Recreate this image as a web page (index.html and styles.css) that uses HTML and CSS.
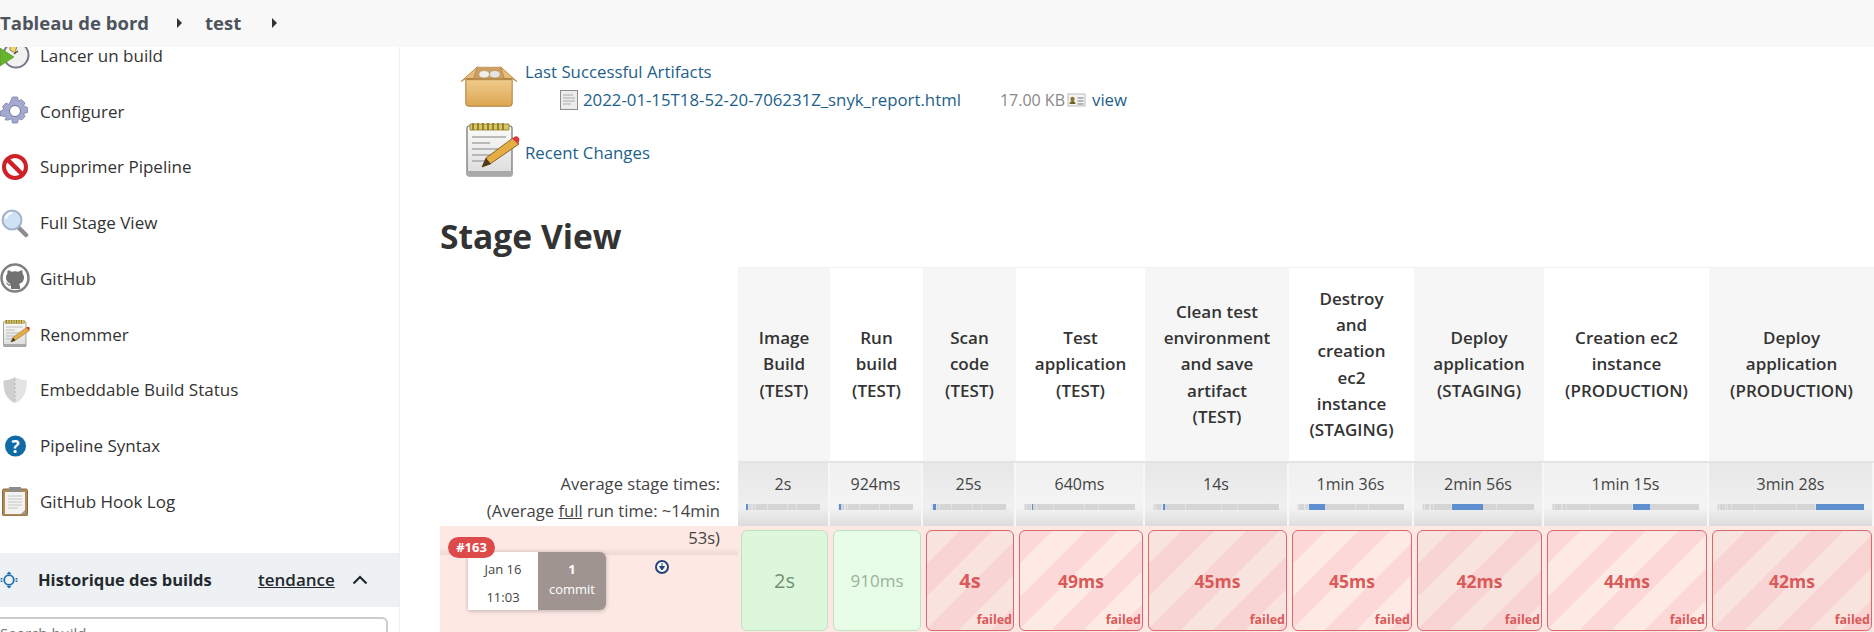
FILE: index.html
```html
<!DOCTYPE html>
<html lang="fr">
<head>
<meta charset="utf-8">
<title>test - Jenkins</title>
<link rel="stylesheet" href="styles.css">
</head>
<body>
<svg class="defs" width="0" height="0" aria-hidden="true">
  <defs>
    <linearGradient id="pad" x1="0" y1="0" x2="0" y2="1"><stop offset="0" stop-color="#fbfbf8"/><stop offset="1" stop-color="#dcdcdc"/></linearGradient>
    <linearGradient id="boxg" x1="0" y1="0" x2="0" y2="1"><stop offset="0" stop-color="#f0cb8a"/><stop offset="1" stop-color="#dca653"/></linearGradient>
    <symbol id="notepad" viewBox="0 0 60 60">
      <rect x="7" y="5" width="45" height="50" rx="2" fill="url(#pad)" stroke="#6e6e6e" stroke-width="1.2"/>
      <rect x="7" y="50" width="45" height="5" fill="#a9a9a9"/>
      <path d="M10 3h39v6H10z" fill="#d8c66a" stroke="#8d7a20" stroke-width=".8"/>
      <path d="M13 2v7M18 2v7M23 2v7M28 2v7M33 2v7M38 2v7M43 2v7" stroke="#857218" stroke-width="1.6"/>
      <path d="M12 16h34M12 22h18M12 28h28M12 34h18M12 40h14" stroke="#a8a8a8" stroke-width="1.4"/>
      <path d="M22 46l4-9 27-20 6 6-29 20z" fill="#e5ae44" stroke="#8a6420" stroke-width="1"/>
      <path d="M22 46l4-9 5 6z" fill="#4a3a20"/>
      <path d="M52 17.500l3-2a3.500 3.500 0 0 1 4 5l-1 2.500z" fill="#d8383c"/>
    </symbol>
  </defs>
</svg>

<header class="crumbs">
  <a class="crumb">Tableau de bord</a>
  <span class="caret"></span>
  <a class="crumb crumb-test">test</a>
  <span class="caret caret-last"></span>
</header>

<div class="page">
  <aside class="side">
    <nav class="tasks">
      <a class="task">
        <svg class="ti" viewBox="0 0 30 30"><circle cx="16" cy="15" r="12.500" fill="#f1f1f1" stroke="#77778a" stroke-width="2"/><path d="M10 4l7 2-2 7-5-3z" fill="#f2d66b" stroke="#7c6a20" stroke-width=".8"/><path d="M14 14l4-3" stroke="#555" stroke-width="1.500"/><path d="M0 8l14 9L0 26z" fill="#66b32e" stroke="#4b8f1e" stroke-width=".6"/></svg>
        <span>Lancer un build</span>
      </a>
      <a class="task">
        <svg class="ti" viewBox="0 0 30 30"><path d="M12.500 1h5l1 4 3-1.500 3.500 3.500-1.500 3 4 1.500v5l-4 1 1.500 3-3.500 3.500-3-1.500-1 4.500h-5l-1-4.500-3 1.500L5 24l1.500-3-4-1H.5v-5l3.500-1.500-1.500-3L6 7l3 1.500z" fill="#a3a9cf" stroke="#7a81a8" stroke-width=".8"/><circle cx="15" cy="15" r="5.500" fill="#fff" stroke="#6f7699"/></svg>
        <span>Configurer</span>
      </a>
      <a class="task">
        <svg class="ti" viewBox="0 0 30 30"><circle cx="15" cy="15" r="11" fill="#fff" stroke="#cf2027" stroke-width="4"/><path d="M7.500 7.500l15 15" stroke="#cf2027" stroke-width="4.500"/></svg>
        <span>Supprimer Pipeline</span>
      </a>
      <a class="task">
        <svg class="ti" viewBox="0 0 30 30"><path d="M18 19l8 8" stroke="#8b8f94" stroke-width="4.500" stroke-linecap="round"/><circle cx="12" cy="12" r="9.500" fill="#cfe2f5" stroke="#a4b4c6" stroke-width="2"/><path d="M6 11a6 6 0 0 1 6-6" stroke="#fff" stroke-width="2" fill="none"/></svg>
        <span>Full Stage View</span>
      </a>
      <a class="task">
        <svg class="ti" viewBox="0 0 30 30"><circle cx="15" cy="15" r="13.500" fill="#fff" stroke="#808080" stroke-width="2.500"/><path d="M11 26v-3.500c-3 .6-4-1-5-3 1.200 0 2 1 3 2l2-.5c-3-1-5-3-5-6.500 0-1.500.5-2.800 1.500-3.800-.3-1.200-.2-2.500.4-3.500 1.400.1 2.600.8 3.600 1.600a11 11 0 0 1 7 0c1-.8 2.200-1.500 3.600-1.600.6 1 .7 2.300.4 3.500 1 1 1.500 2.300 1.500 3.800 0 3.500-2 5.500-5 6.500.6.700 1 1.700 1 3V26z" fill="#717171"/></svg>
        <span>GitHub</span>
      </a>
      <a class="task">
        <svg class="ti" viewBox="0 0 60 60"><use href="#notepad"/></svg>
        <span>Renommer</span>
      </a>
      <a class="task">
        <svg class="ti" viewBox="0 0 30 30"><path d="M15 2c3 2 8 3.500 11.500 3.500C27 17 23 25 15 28 7 25 3 17 3.500 5.500 7 5.500 12 4 15 2z" fill="#cfcfcf"/><path d="M15 2c3 2 8 3.500 11.500 3.500C27 17 23 25 15 28z" fill="#e4e4e4"/><path d="M15 4v22" stroke="#b5b5b5" stroke-dasharray="2 2"/></svg>
        <span>Embeddable Build Status</span>
      </a>
      <a class="task">
        <svg class="ti" viewBox="0 0 30 30"><circle cx="15.500" cy="15" r="10.500" fill="#0f6aa5"/><text class="help-q" x="15.500" y="21.500" text-anchor="middle">?</text></svg>
        <span>Pipeline Syntax</span>
      </a>
      <a class="task">
        <svg class="ti" viewBox="0 0 30 30"><rect x="2.500" y="3" width="25" height="27" rx="1.500" fill="#b08a58" stroke="#8a6a3e"/><path d="M5 6h20v19l-4 3H5z" fill="#f3f3f0"/><path d="M21 28l4-4v4z" fill="#9a9a9a"/><rect x="9" y="1" width="12" height="5" fill="#8d8d8d"/><path d="M8 10h14M8 13h14M8 16h14M8 19h14M8 22h10" stroke="#c4c4c4"/></svg>
        <span>GitHub Hook Log</span>
      </a>
    </nav>

    <section class="history">
      <div class="history-bar">
        <svg class="sun" viewBox="0 0 18 18"><circle cx="9" cy="9" r="4.800" fill="none" stroke="#1f6fa8" stroke-width="1.800"/><path d="M9 .5l2.500 2.500h-5zM9 17.500l2.500-2.500h-5z" fill="#1f6fa8"/><path d="M1.500 7v4M16.500 7v4" stroke="#1f6fa8" stroke-width="1.800" stroke-dasharray="1.500 1"/></svg>
        <strong class="history-title">Historique des builds</strong>
        <a class="trend">tendance</a>
        <svg class="chev" viewBox="0 0 16 10"><path d="M1.500 8.500L8 2l6.500 6.500" fill="none" stroke="#24292e" stroke-width="2.200"/></svg>
      </div>
      <div class="search">Search build</div>
    </section>
  </aside>

  <main class="main">
    <div class="permalink">
      <svg class="big-icon box-icon" viewBox="0 0 60 48" preserveAspectRatio="none">
        <path d="M6 16h48v26a3 3 0 0 1-3 3H9a3 3 0 0 1-3-3z" fill="url(#boxg)" stroke="#a97a34"/>
        <path d="M14 15l4-13h24l4 13z" fill="#caa066"/>
        <ellipse cx="25" cy="10" rx="5" ry="3.500" fill="#eee"/><ellipse cx="36" cy="10" rx="5" ry="3.500" fill="#e4e4e4"/>
        <path d="M1 18L18 2l-4 13H6zM59 18L42 2l4 13h8z" fill="#e9bd78" stroke="#a97a34" stroke-width=".8"/>
        <path d="M6 15h48" stroke="#a97a34"/>
      </svg>
      <div class="perma-text">
        <a class="link">Last Successful Artifacts</a>
        <div class="artifact">
          <svg class="doc" viewBox="0 0 18 20"><rect x=".5" y=".5" width="17" height="19" fill="#ececec" stroke="#8c8c8c"/><path d="M3 5h10M3 8h12M3 11h12M3 14h8" stroke="#a8a8a8"/></svg>
          <a class="link file">2022-01-15T18-52-20-706231Z_snyk_report.html</a>
          <span class="size">17.00 KB</span>
          <svg class="view-icon" viewBox="0 0 18 16"><rect x=".5" y="2" width="17" height="12" fill="#f4f4f4" stroke="#bbb"/><circle cx="5" cy="7" r="2.200" fill="#8a7a30"/><path d="M2 12c0-2 1.500-3 3-3s3 1 3 3z" fill="#6e6226"/><path d="M10 6h6M10 9h6M10 12h6" stroke="#777"/></svg>
          <a class="link view">view</a>
        </div>
      </div>
    </div>
    <div class="permalink changes">
      <svg class="big-icon note-icon" viewBox="0 0 60 60"><use href="#notepad"/></svg>
      <a class="link changes-link">Recent Changes</a>
    </div>

    <h2 class="stage-title">Stage View</h2>

    <div class="stage">
      <div class="corner"></div>
      <div class="head alt">Image Build (TEST)</div>
      <div class="head">Run build (TEST)</div>
      <div class="head alt">Scan code (TEST)</div>
      <div class="head">Test application (TEST)</div>
      <div class="head alt">Clean test environment and save artifact (TEST)</div>
      <div class="head">Destroy and creation ec2 instance (STAGING)</div>
      <div class="head alt">Deploy application (STAGING)</div>
      <div class="head">Creation ec2 instance (PRODUCTION)</div>
      <div class="head alt">Deploy application (PRODUCTION)</div>

      <div class="avg-label">Average stage times:<br>(Average <u>full</u> run time: ~14min 53s)</div>
      <div class="avg alt"><span>2s</span><div class="bar"><i class="on" style="flex-grow:2"></i><i style="flex-grow:.9"></i><i style="flex-grow:25"></i><i style="flex-grow:.64"></i><i style="flex-grow:14"></i><i style="flex-grow:96"></i><i style="flex-grow:176"></i><i style="flex-grow:75"></i><i style="flex-grow:208"></i></div></div>
      <div class="avg"><span>924ms</span><div class="bar"><i style="flex-grow:2"></i><i class="on" style="flex-grow:.9"></i><i style="flex-grow:25"></i><i style="flex-grow:.64"></i><i style="flex-grow:14"></i><i style="flex-grow:96"></i><i style="flex-grow:176"></i><i style="flex-grow:75"></i><i style="flex-grow:208"></i></div></div>
      <div class="avg alt"><span>25s</span><div class="bar"><i style="flex-grow:2"></i><i style="flex-grow:.9"></i><i class="on" style="flex-grow:25"></i><i style="flex-grow:.64"></i><i style="flex-grow:14"></i><i style="flex-grow:96"></i><i style="flex-grow:176"></i><i style="flex-grow:75"></i><i style="flex-grow:208"></i></div></div>
      <div class="avg"><span>640ms</span><div class="bar"><i style="flex-grow:2"></i><i style="flex-grow:.9"></i><i style="flex-grow:25"></i><i class="on" style="flex-grow:.64"></i><i style="flex-grow:14"></i><i style="flex-grow:96"></i><i style="flex-grow:176"></i><i style="flex-grow:75"></i><i style="flex-grow:208"></i></div></div>
      <div class="avg alt"><span>14s</span><div class="bar"><i style="flex-grow:2"></i><i style="flex-grow:.9"></i><i style="flex-grow:25"></i><i style="flex-grow:.64"></i><i class="on" style="flex-grow:14"></i><i style="flex-grow:96"></i><i style="flex-grow:176"></i><i style="flex-grow:75"></i><i style="flex-grow:208"></i></div></div>
      <div class="avg"><span>1min 36s</span><div class="bar"><i style="flex-grow:2"></i><i style="flex-grow:.9"></i><i style="flex-grow:25"></i><i style="flex-grow:.64"></i><i style="flex-grow:14"></i><i class="on" style="flex-grow:96"></i><i style="flex-grow:176"></i><i style="flex-grow:75"></i><i style="flex-grow:208"></i></div></div>
      <div class="avg alt"><span>2min 56s</span><div class="bar"><i style="flex-grow:2"></i><i style="flex-grow:.9"></i><i style="flex-grow:25"></i><i style="flex-grow:.64"></i><i style="flex-grow:14"></i><i style="flex-grow:96"></i><i class="on" style="flex-grow:176"></i><i style="flex-grow:75"></i><i style="flex-grow:208"></i></div></div>
      <div class="avg"><span>1min 15s</span><div class="bar"><i style="flex-grow:2"></i><i style="flex-grow:.9"></i><i style="flex-grow:25"></i><i style="flex-grow:.64"></i><i style="flex-grow:14"></i><i style="flex-grow:96"></i><i style="flex-grow:176"></i><i class="on" style="flex-grow:75"></i><i style="flex-grow:208"></i></div></div>
      <div class="avg alt"><span>3min 28s</span><div class="bar"><i style="flex-grow:2"></i><i style="flex-grow:.9"></i><i style="flex-grow:25"></i><i style="flex-grow:.64"></i><i style="flex-grow:14"></i><i style="flex-grow:96"></i><i style="flex-grow:176"></i><i style="flex-grow:75"></i><i class="on" style="flex-grow:208"></i></div></div>

      <div class="build">
        <span class="badge">#163</span>
        <div class="build-body">
          <div class="card">
            <div class="date"><span>Jan 16</span><span>11:03</span></div>
            <div class="commit"><b>1</b><span>commit</span></div>
          </div>
          <svg class="dl" viewBox="0 0 16 16"><circle cx="8" cy="8" r="6" fill="#fff" stroke="#24437a" stroke-width="2"/><path d="M8 4v5M5.500 7.500L8 11l2.500-3.500z" fill="#24437a" stroke="#24437a"/></svg>
        </div>
      </div>
      <div class="wrap alt"><div class="cell ok"><span class="big">2s</span></div></div>
      <div class="wrap"><div class="cell ok light">910ms</div></div>
      <div class="wrap alt"><div class="cell bad dim"><strong class="big">4s</strong><em>failed</em></div></div>
      <div class="wrap"><div class="cell bad"><strong>49ms</strong><em>failed</em></div></div>
      <div class="wrap alt"><div class="cell bad dim"><strong>45ms</strong><em>failed</em></div></div>
      <div class="wrap"><div class="cell bad"><strong>45ms</strong><em>failed</em></div></div>
      <div class="wrap alt"><div class="cell bad dim"><strong>42ms</strong><em>failed</em></div></div>
      <div class="wrap"><div class="cell bad"><strong>44ms</strong><em>failed</em></div></div>
      <div class="wrap alt"><div class="cell bad dim"><strong>42ms</strong><em>failed</em></div></div>
    </div>
  </main>
</div>
</body>
</html>
```

FILE: styles.css
```css
* { box-sizing: border-box; }
html, body { margin: 0; padding: 0; height: 632px; overflow: hidden; }
body {
  font-family: "Open Sans", "Noto Sans", sans-serif;
  font-size: 17px;
  color: #333;
  background: #fff;
  display: flex;
  flex-direction: column;
}
.defs { position: absolute; }

.crumbs {
  height: 47px;
  flex: none;
  display: flex;
  align-items: center;
  padding-bottom: 2px;
  background: #f8f8f8;
  position: relative;
  z-index: 2;
  font-weight: 700;
  font-size: 18.500px;
  color: #4d545d;
}
.crumb-test { margin-left: 23px; }
.caret {
  width: 0;
  height: 0;
  border-left: 5px solid #333;
  border-top: 5px solid transparent;
  border-bottom: 5px solid transparent;
  margin-left: 28px;
}
.caret-last { margin-left: 31px; }

.page { flex: 1; min-height: 0; display: flex; overflow: hidden; }

.side {
  width: 400px;
  flex: none;
  border-right: 1px solid #eeeeee;
  display: flex;
  flex-direction: column;
}
.tasks { margin-top: -19.500px; display: flex; flex-direction: column; }
.task {
  height: 55.750px;
  display: flex;
  align-items: center;
  gap: 10px;
  color: #333;
  font-size: 17px;
}
.ti { width: 30px; height: 30px; flex: none; }
.help-q { font: 700 17px "Open Sans", sans-serif; fill: #fff; }

.history { margin-top: 23.500px; }
.history-bar {
  height: 54px;
  background: #edf1f4;
  display: flex;
  align-items: center;
  width: 399px;
  color: #24292e;
}
.sun { width: 18px; height: 18px; flex: none; margin-right: 20px; }
.history-title { font-weight: 700; font-size: 16.500px; width: 220px; }
.trend { font-weight: 600; font-size: 17px; text-decoration: underline; width: 94px; }
.chev { width: 16px; height: 10px; }
.search {
  margin-top: 10px;
  width: 388px;
  height: 40px;
  border: 2px solid #cccccc;
  border-left: 0;
  border-radius: 0 6px 6px 0;
  padding: 4px 0 0 0;
  font-size: 15px;
  color: #777;
}

.main { flex: 1; min-width: 0; padding-left: 40px; overflow: hidden; }
.link { color: #1d5f8a; font-size: 16.800px; }
.permalink { display: flex; align-items: flex-start; margin-left: 20px; height: 67px; }
.big-icon { flex: none; width: 58px; }
.box-icon { height: 44px; margin-top: 18px; }
.perma-text { padding-top: 11px; line-height: 28px; margin-left: 7px; }
.artifact { display: flex; align-items: center; padding-left: 35px; }
.doc { width: 18px; height: 20px; margin-right: 5px; }
.size { color: #888; margin-left: 39px; font-size: 16px; }
.view-icon { width: 19px; height: 16px; margin: 0 6px 0 2px; }
.changes { align-items: center; margin-top: 9px; height: 56px; }
.note-icon { width: 60px; height: 60px; }
.changes-link { margin-left: 5px; padding-top: 2px; }

.stage-title {
  margin: 0;
  padding-top: 35px;
  height: 88px;
  font-size: 33.600px;
  line-height: 44px;
  font-weight: 700;
  color: #333;
}

.stage {
  display: grid;
  grid-template-columns: 298px 92px 93px 93px 129px 144px 125px 130px 165px 165px;
  grid-template-rows: 196px 63px 106px;
}
.corner { background: #fff; }
.head {
  display: flex;
  align-items: center;
  justify-content: center;
  text-align: center;
  padding: 0 16px;
  background: #fff;
  font-weight: 600;
  font-size: 17px;
  line-height: 26.300px;
  color: #333;
  border-top: 1px solid #f2f2f2;
  border-bottom: 2px solid #e4e4e4;
}
.head.alt { background: #f6f6f6; }

.avg-label {
  position: relative;
  z-index: 1;
  text-align: right;
  padding: 7px 18px 0 20px;
  font-size: 16.600px;
  line-height: 27.200px;
  color: #444;
}
.avg {
  display: flex;
  flex-direction: column;
  align-items: stretch;
  padding: 10px 8px 0;
  text-align: center;
  font-size: 16px;
  line-height: 22px;
  color: #444;
  background: linear-gradient(#f0f0f0 0, #f4f4f4 70%, #dedede 100%);
  border-right: 2px solid #f7f7f7;
}
.avg.alt { background: linear-gradient(#e7e7e7 0, #f0f0f0 70%, #dcdcdc 100%); }
.bar {
  display: flex;
  height: 6px;
  margin-top: 9px;
  background: #d5d5d5;
}
.bar i { flex-basis: 0; min-width: 0; background: #d5d5d5; border-right: 1px solid #e3e3e3; }
.bar i:last-child { border-right: 0; }
.bar i.on { background: #5d8fd1; border-right: 0; min-width: 1.500px; }

.build {
  position: relative;
  background: linear-gradient(#fde8e4 0, #fde8e4 22px, #efdad6 28px, #f1dcd8 29px, #fde8e4 29px);
}
.badge {
  position: absolute;
  left: 8px;
  top: 11px;
  z-index: 1;
  width: 47px;
  height: 21px;
  border-radius: 11px;
  background: #dd4a4a;
  color: #fff;
  font-size: 13px;
  font-weight: 700;
  line-height: 21px;
  text-align: center;
}
.build-body { display: flex; align-items: flex-start; padding: 26px 0 0 28px; }
.card { display: flex; height: 58px; box-shadow: 0 1px 4px rgba(0,0,0,.25); border-radius: 0 6px 6px 0; }
.date {
  width: 70px;
  background: #fff;
  display: flex;
  flex-direction: column;
  align-items: center;
  padding-top: 3px;
  font-size: 13px;
  line-height: 28px;
  color: #444;
}
.commit {
  width: 68px;
  background: #a09490;
  color: #fff;
  border-radius: 0 6px 6px 0;
  display: flex;
  flex-direction: column;
  align-items: center;
  font-size: 13px;
  line-height: 20px;
  padding-top: 7px;
}
.dl { width: 16px; height: 16px; margin: 7px 0 0 48px; flex: none; }

.wrap { padding: 4px 2px 1px 3px; background: #fde8e4; }
.cell {
  position: relative;
  height: 100%;
  border-radius: 6px;
  display: flex;
  align-items: center;
  justify-content: center;
  font-size: 18px;
}
.ok { background: #ddf7dc; border: 1px solid #bfe3bf; color: #70906f; }
.ok.light { background: #e7fde5; color: #9db09c; font-size: 17px; }
.bad {
  border: 1.500px solid #d96a69;
  color: #d95a58;
  background: repeating-linear-gradient(135deg, #fdd8d8 0, #fdd8d8 23px, #fdeae5 23px, #fdeae5 46px);
}
.bad.dim { background: repeating-linear-gradient(135deg, #f9e3de 0, #f9e3de 23px, #f8d4d4 23px, #f8d4d4 46px); }
.bad strong { font-size: 17.500px; font-weight: 700; }
.big, .bad strong.big { font-size: 20px; }
.bad em {
  position: absolute;
  right: 1px;
  bottom: 1px;
  font-style: normal;
  font-weight: 700;
  font-size: 12.500px;
  line-height: 18px;
}
```
